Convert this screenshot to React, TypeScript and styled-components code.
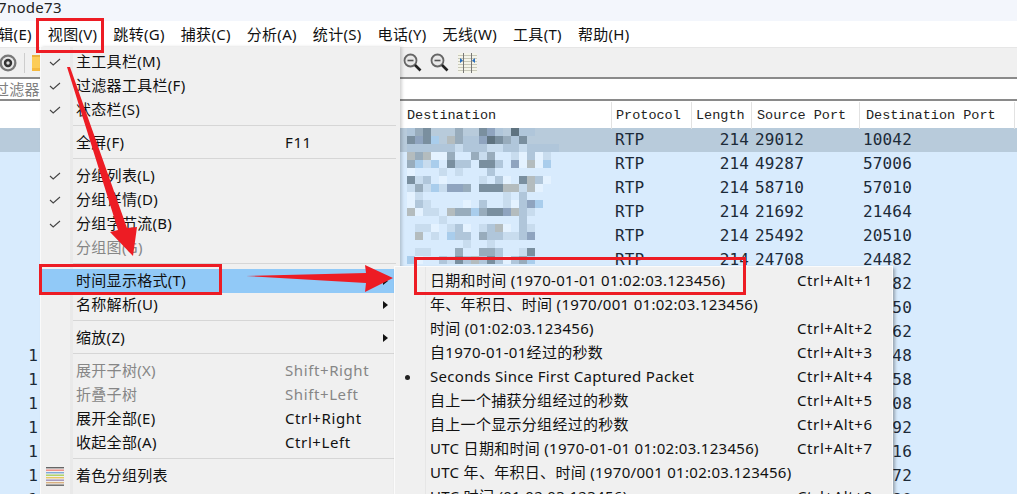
import React from "react";
import styled, { createGlobalStyle } from "styled-components";

const Global = createGlobalStyle`
  html, body { margin: 0; padding: 0; background: #fff; overflow: hidden; }
  #root { width: 1017px; height: 494px; }
`;

const UI_FONT = `"Noto Sans", "Noto Sans CJK SC", sans-serif`;

const Page = styled.div`
  position: relative;
  width: 1017px;
  height: 494px;
  overflow: hidden;
  background: #fff;
  font-family: ${UI_FONT};
  font-size: 15px;
  letter-spacing: 0.3px;
  color: #111;
`;

const TitleBar = styled.div`
  height: 21px;
  background: #f3f6fc;
  line-height: 14px;
  font-size: 15px;
  margin-left: -2px;
  color: #222;
`;

const MenuBar = styled.div`
  height: 26px;
  display: flex;
  align-items: center;
  margin-left: -25px;
  background: #fff;
`;

const MenuTitle = styled.span`
  padding: 0 8px;
  margin-bottom: 2px;
  white-space: nowrap;
`;

const Toolbar = styled.div`
  height: 30px;
  background: #f0f0f0;
  display: flex;
  align-items: center;
  border-top: 1px solid #e6e6e6;
  box-sizing: border-box;
`;

const ToolSep = styled.div`
  width: 1px;
  height: 20px;
  background: #cdcdcd;
  margin: 0 7px;
`;

const ToolGap = styled.div`
  width: 359px;
`;

const FilterBar = styled.div`
  height: 24px;
  box-sizing: border-box;
  background: #fff;
  border-top: 2px solid #8a8a8a;
  border-bottom: 2px solid #8a8a8a;
  font-size: 15px;
  line-height: 20px;
  color: #808080;
  margin-left: -6px;
  overflow: hidden;
  white-space: nowrap;
`;

const PacketTable = styled.div`
  position: relative;
  padding-top: 1px;
`;

const Columns = "40px 364px 208px 80px 60px 108px 155px 2px";

const HeaderRow = styled.div`
  display: grid;
  grid-template-columns: ${Columns};
  height: 26px;
  background: #fff;
  font-family: "Liberation Mono", monospace;
  font-size: 13.5px;
  letter-spacing: 0;
  color: #222;
`;

const HeadCell = styled.div<{ $plain?: boolean; $pad?: number }>`
  box-sizing: border-box;
  padding-left: ${(p) => p.$pad ?? 4}px;
  line-height: 27px;
  white-space: nowrap;
  border-right: ${(p) => (p.$plain ? "none" : "1px solid #e2e2e2")};
`;

const PacketRow = styled.div<{ $selected?: boolean }>`
  display: grid;
  grid-template-columns: ${Columns};
  height: 24px;
  line-height: 23px;
  background: ${(p) => (p.$selected ? "#b8cbdb" : "#d8ebfd")};
  font-family: "DejaVu Sans Mono", monospace;
  font-size: 16px;
  letter-spacing: 0.15px;
  color: #1c2a38;
`;

const Cell = styled.div<{ $right?: boolean }>`
  box-sizing: border-box;
  padding: ${(p) => (p.$right ? "0 3px 0 0" : "0 0 0 3px")};
  text-align: ${(p) => (p.$right ? "right" : "left")};
  white-space: nowrap;
  overflow: hidden;
`;

const NumberCell = styled(Cell)`
  padding: 0 2px 0 0;
  text-align: right;
`;

const Mosaic = styled.svg`
  position: absolute;
  left: 407px;
  top: 27px;
  filter: blur(0.4px);
`;

const Menu = styled.div`
  position: absolute;
  left: 40px;
  top: 47px;
  width: 360px;
  height: 460px;
  padding-top: 3px;
  box-sizing: border-box;
  background: linear-gradient(90deg, #f0f0f0 0 29px, #e9e9e9 29px 32px, #f0f0f0 32px);
  border-left: 1px solid #fafafa;
  box-shadow: 2px 0 3px rgba(0, 0, 0, 0.18);
`;

const SubMenu = styled.div`
  position: absolute;
  left: 394px;
  top: 266px;
  width: 499px;
  height: 240px;
  padding-top: 2px;
  box-sizing: border-box;
  background: linear-gradient(90deg, #f0f0f0 0 30px, #e6e6e6 30px 31px, #f0f0f0 31px);
  border: 1px solid #fbfbfb;
  box-shadow: 2px 2px 3px rgba(0, 0, 0, 0.3);
`;

const Row = styled.div<{ $active?: boolean; $disabled?: boolean; $cols: string }>`
  display: grid;
  grid-template-columns: ${(p) => p.$cols};
  grid-template-rows: 24px;
  align-items: center;
  height: 24px;
  line-height: 22px;
  white-space: nowrap;
  background: ${(p) => (p.$active ? "#91c9f7" : "transparent")};
  color: ${(p) => (p.$disabled ? "#868686" : "#111")};
`;

const Label = styled.span`
  margin-bottom: 2px;
`;

const Shortcut = styled.span`
  margin-bottom: 2px;
  letter-spacing: 0.6px;
`;

const Gutter = styled.div`
  display: flex;
  align-items: center;
  justify-content: center;
  padding-right: 7px;
`;

const BulletGutter = styled.div`
  display: flex;
  align-items: center;
  padding-left: 10px;
`;

const Arrow = styled.span`
  width: 0;
  height: 0;
  justify-self: end;
  margin-right: 12px;
  border-left: 5px solid #111;
  border-top: 4px solid transparent;
  border-bottom: 4px solid transparent;
`;

const Separator = styled.div<{ $inset: number }>`
  height: 1px;
  background: #d6d6d6;
  margin: 3px 4px 5px ${(p) => p.$inset}px;
`;

const Bullet = styled.span`
  width: 5px;
  height: 5px;
  border-radius: 50%;
  background: #222;
`;

const Annotations = styled.svg`
  position: absolute;
  left: 0;
  top: 0;
  pointer-events: none;
`;

const Gear = () => (
  <svg width="18" height="20" viewBox="0 0 18 20" style={{ marginLeft: -1 }}>
    <circle cx="9" cy="10" r="8.5" fill="#777" />
    <circle cx="9" cy="10" r="6.2" fill="#e8e8e8" />
    <circle cx="9" cy="10" r="4.2" fill="#333" />
    <circle cx="9" cy="10" r="1.7" fill="#ddd" />
  </svg>
);

const Folder = () => (
  <svg width="12" height="16" viewBox="0 0 12 16">
    <rect x="0" y="0" width="12" height="16" fill="#fccc58" />
    <rect x="0" y="0" width="12" height="2" fill="#e9b13c" />
    <rect x="0" y="13" width="12" height="3" fill="#f5b93f" />
  </svg>
);

const Zoom = () => (
  <svg width="19" height="19" viewBox="0 0 19 19" style={{ marginRight: 8 }}>
    <circle cx="7.5" cy="7.5" r="6" fill="#e8e8e8" stroke="#666" strokeWidth="1.8" />
    <path d="M4.5 7.5h6" stroke="#555" strokeWidth="1.6" />
    <path d="M12 12l5.5 5.5" stroke="#222" strokeWidth="2.6" />
  </svg>
);

const ColumnsIcon = () => (
  <svg width="19" height="20" viewBox="0 0 19 20" style={{ marginLeft: 1 }}>
    <rect x="0" y="0" width="19" height="20" fill="#f4f4ea" />
    {[2, 5, 8, 11, 14, 17].map((y) => (
      <path key={y} d={`M0 ${y}.5h19`} stroke="#c8c8b8" />
    ))}
    <path d="M5.5 0v20M13.5 0v20" stroke="#777" />
    <path d="M2 5l3 2.5-3 2.5zM17 5l-3 2.5 3 2.5z" fill="#2a70c0" />
  </svg>
);

const Check = () => (
  <svg width="12" height="8" viewBox="0 0 12 8">
    <path d="M1 4l3.2 3L11 1" fill="none" stroke="#444" strokeWidth="1.1" />
  </svg>
);

const ColorIcon = () => (
  <svg width="18" height="20" viewBox="0 0 18 20">
    {["#666", "#ee8a80", "#7fa8d8", "#a8d060", "#e8c860", "#a090b8", "#d8b080", "#666"].map((c, i) => (
      <rect key={i} x="0" y={1 + i * 2.5} width="18" height="1.4" fill={c} />
    ))}
  </svg>
);

const menuTitles = ["编辑(E)", "视图(V)", "跳转(G)", "捕获(C)", "分析(A)", "统计(S)", "电话(Y)", "无线(W)", "工具(T)", "帮助(H)"];

const sources = ["29012", "49287", "58710", "21692", "25492", "24708", "21582", "30150", "41762", "52148", "33858", "46608", "28892", "37716", "50172", "44320"];
const dests = ["10042", "57006", "57010", "21464", "20510", "24482", "30682", "41250", "52362", "33548", "46158", "28708", "37692", "50416", "44272", "21880"];

const mosaicRows = [
  "345...4..583.633...",
  "5859.7433865435....",
  "3333332333223323333",
  "747114..424..21312.",
  "4929.533.553.81719.",
  "1...2.2...3........",
  "523.1....2.31.5731.",
  "24292884.55577271..",
  "12..........2.3....",
  "132....1.3..21389..",
  "7122.74494558732...",
  "....2.........3....",
  ".221.231.2371.32...",
  ".7.2.933.4332238...",
  ".......2..2........",
  ".22...4..443..25...",
  "91..325373531349...",
];

const shades: Record<string, string> = {
  "1": "#e4f2ff",
  "2": "#c8dcee",
  "3": "#b0c6da",
  "4": "#98acbc",
  "5": "#7a8f9f",
  "6": "#5f7380",
  "7": "#b4bcbe",
  "8": "#8fa4bf",
  "9": "#a9cdec",
};

type Item =
  | { sep: true }
  | { sep?: false; label: string; key?: string; check?: boolean; disabled?: boolean; active?: boolean; more?: boolean; icon?: boolean };

const viewMenu: Item[] = [
  { label: "主工具栏(M)", check: true },
  { label: "过滤器工具栏(F)", check: true },
  { label: "状态栏(S)", check: true },
  { sep: true },
  { label: "全屏(F)", key: "F11" },
  { sep: true },
  { label: "分组列表(L)", check: true },
  { label: "分组详情(D)", check: true },
  { label: "分组字节流(B)", check: true },
  { label: "分组图(G)", disabled: true },
  { sep: true },
  { label: "时间显示格式(T)", active: true, more: true },
  { label: "名称解析(U)", more: true },
  { sep: true },
  { label: "缩放(Z)", more: true },
  { sep: true },
  { label: "展开子树(X)", key: "Shift+Right", disabled: true },
  { label: "折叠子树", key: "Shift+Left", disabled: true },
  { label: "展开全部(E)", key: "Ctrl+Right" },
  { label: "收起全部(A)", key: "Ctrl+Left" },
  { sep: true },
  { label: "着色分组列表", icon: true },
];

const timeMenu: [string, string, boolean?][] = [
  ["日期和时间 (1970-01-01 01:02:03.123456)", "Ctrl+Alt+1"],
  ["年、年积日、时间 (1970/001 01:02:03.123456)", ""],
  ["时间 (01:02:03.123456)", "Ctrl+Alt+2"],
  ["自1970-01-01经过的秒数", "Ctrl+Alt+3"],
  ["Seconds Since First Captured Packet", "Ctrl+Alt+4", true],
  ["自上一个捕获分组经过的秒数", "Ctrl+Alt+5"],
  ["自上一个显示分组经过的秒数", "Ctrl+Alt+6"],
  ["UTC 日期和时间 (1970-01-01 01:02:03.123456)", "Ctrl+Alt+7"],
  ["UTC 年、年积日、时间 (1970/001 01:02:03.123456)", ""],
  ["UTC 时间 (01:02:03.123456)", "Ctrl+Alt+8"],
];

export default function App() {
  return (
    <Page>
      <Global />
      <TitleBar>7node73</TitleBar>
      <MenuBar>
        {menuTitles.map((t) => (
          <MenuTitle key={t}>{t}</MenuTitle>
        ))}
      </MenuBar>
      <Toolbar>
        <Gear />
        <ToolSep />
        <Folder />
        <ToolGap />
        <Zoom />
        <Zoom />
        <ColumnsIcon />
      </Toolbar>
      <FilterBar>过滤器</FilterBar>
      <PacketTable>
        <HeaderRow>
          <HeadCell $plain />
          <HeadCell $plain />
          <HeadCell $pad={3}>Destination</HeadCell>
          <HeadCell>Protocol</HeadCell>
          <HeadCell>Length</HeadCell>
          <HeadCell $pad={5}>Source Port</HeadCell>
          <HeadCell $pad={6}>Destination Port</HeadCell>
          <HeadCell $plain />
        </HeaderRow>
        {sources.map((s, i) => (
          <PacketRow key={s} $selected={i === 0}>
            <NumberCell>{i >= 9 ? "1" : ""}</NumberCell>
            <Cell />
            <Cell />
            <Cell>RTP</Cell>
            <Cell $right>214</Cell>
            <Cell>{s}</Cell>
            <Cell>{dests[i]}</Cell>
            <Cell />
          </PacketRow>
        ))}
        <Mosaic width="152" height="136" viewBox="0 0 152 136" shapeRendering="crispEdges">
          {mosaicRows.map((row, y) =>
            row.split("").map((c, x) =>
              shades[c] ? <rect key={`${x}-${y}`} x={x * 8} y={y * 8} width="8" height="8" fill={shades[c]} /> : null
            )
          )}
        </Mosaic>
      </PacketTable>

      <Menu>
        {viewMenu.map((m, i) =>
          m.sep ? (
            <Separator key={i} $inset={32} />
          ) : (
            <Row key={i} $cols="35px 209px 1fr" $active={m.active} $disabled={m.disabled}>
              <Gutter>{m.check ? <Check /> : m.icon ? <ColorIcon /> : null}</Gutter>
              <Label>{m.label}</Label>
              {m.more ? <Arrow /> : <Shortcut>{m.key}</Shortcut>}
            </Row>
          )
        )}
      </Menu>

      <SubMenu>
        {timeMenu.map(([label, key, on]) => (
          <Row key={label} $cols="35px 367px 1fr">
            <BulletGutter>{on ? <Bullet /> : null}</BulletGutter>
            <Label>{label}</Label>
            <Shortcut>{key}</Shortcut>
          </Row>
        ))}
      </SubMenu>

      <Annotations width="1017" height="494" viewBox="0 0 1017 494">
        <g fill="none" stroke="#ed1c24" strokeWidth="3">
          <rect x="37.5" y="19.5" width="65" height="32" />
          <rect x="40.5" y="265.5" width="180" height="28" />
          <rect x="415.5" y="258.5" width="329" height="35" />
        </g>
        <polygon points="67,67 70,67 127,228 137,227 133,256 110,232 118,230" fill="#ed1c24" />
        <polygon points="246,276 366,273 365,265 393,278 365,292 366,283" fill="#ed1c24" />
      </Annotations>
    </Page>
  );
}
